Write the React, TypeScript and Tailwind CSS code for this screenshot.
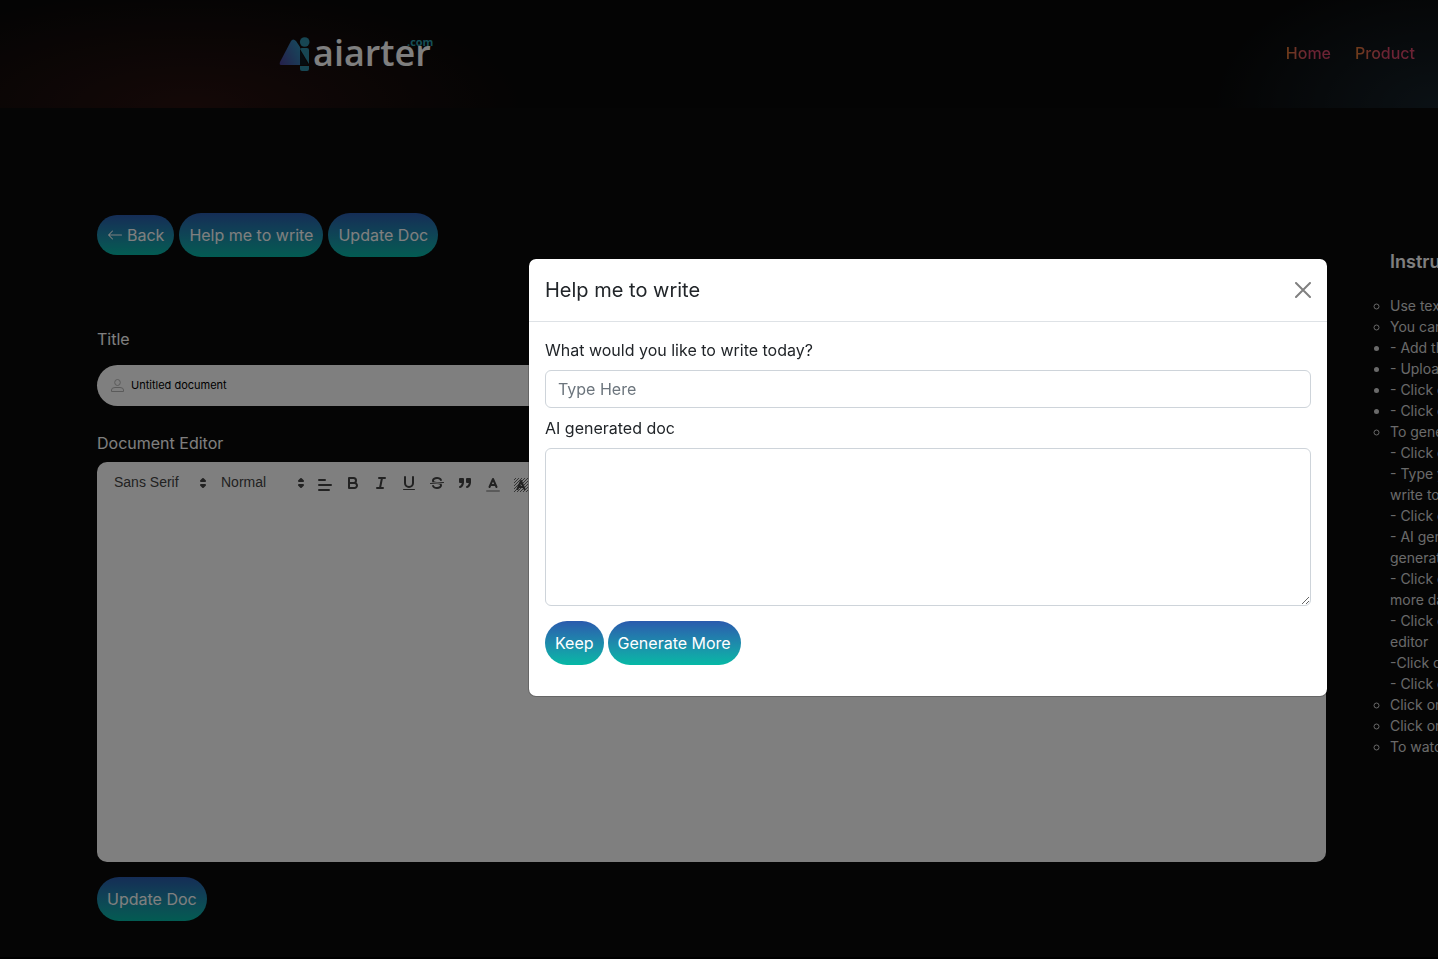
import React from "react";
import { BsArrowLeft } from "react-icons/bs";

const notes = [
  { type: "circle", lines: ["Use text"] },
  { type: "circle", lines: ["You can"] },
  { type: "disc", lines: ["- Add the"] },
  { type: "disc", lines: ["- Upload"] },
  { type: "disc", lines: ["- Click on"] },
  { type: "disc", lines: ["- Click on"] },
  {
    type: "circle",
    lines: [
      "To generate",
      "- Click on",
      "- Type your",
      "write today",
      "- Click on",
      "- AI generated",
      "generated",
      "- Click on",
      "more data",
      "- Click on",
      "editor",
      "-Click on",
      "- Click on",
    ],
  },
  { type: "circle", lines: ["Click on"] },
  { type: "circle", lines: ["Click on"] },
  { type: "circle", lines: ["To watch"] },
];

const tools = [
  {
    name: "Align",
    picker: true,
    icon: <path d="M3 9H15M3 14H13M3 4H9" />,
  },
  {
    name: "Bold",
    icon: (
      <>
        <path d="M5,4H9.5A2.5,2.5,0,0,1,12,6.5v0A2.5,2.5,0,0,1,9.5,9H5V4Z" />
        <path d="M5,9h5.5A2.5,2.5,0,0,1,13,11.5v0A2.5,2.5,0,0,1,10.5,14H5V9Z" />
      </>
    ),
  },
  {
    name: "Italic",
    icon: <path d="M7 4H13M5 14H11M8 14L10 4" />,
  },
  {
    name: "Underline",
    icon: (
      <>
        <path d="M5,3V9a4.012,4.012,0,0,0,4,4H9a4.012,4.012,0,0,0,4-4V3" />
        <rect fill="#444" stroke="none" height="1" width="12" x="3" y="15" rx="0.5" />
      </>
    ),
  },
  {
    name: "Strike",
    icon: (
      <>
        <path strokeWidth="1" d="M15.5 8.5L2.5 9.5" />
        <path
          fill="#444"
          stroke="none"
          d="M9.007,8C6.542,7.791,6,7.519,6,6.5,6,5.792,7.283,5,9,5c1.571,0,2.765.679,2.969,1.309a1,1,0,0,0,1.9-.617C13.356,4.106,11.354,3,9,3,6.2,3,4,4.538,4,6.5a3.2,3.2,0,0,0,.5,1.843Z"
        />
        <path
          fill="#444"
          stroke="none"
          d="M8.984,10C11.457,10.208,12,10.479,12,11.5c0,0.708-1.283,1.5-3,1.5-1.571,0-2.765-.679-2.969-1.309a1,1,0,1,0-1.9.617C4.644,13.894,6.646,15,9,15c2.8,0,5-1.538,5-3.5a3.2,3.2,0,0,0-.5-1.843Z"
        />
      </>
    ),
  },
  {
    name: "Blockquote",
    icon: (
      <g fill="#444">
        <rect height="3" width="3" x="4" y="5" />
        <rect height="3" width="3" x="11" y="5" />
        <path d="M7,8c0,4.031-3,5-3,5" />
        <path d="M14,8c0,4.031-3,5-3,5" />
      </g>
    ),
  },
  {
    name: "Text color",
    picker: true,
    icon: (
      <>
        <path opacity="0.4" d="M3 15H15" />
        <path d="M5.5 11L9 3L12.5 11M11.63 9H6.38" />
      </>
    ),
  },
  {
    name: "Background color",
    picker: true,
    icon: (
      <>
        <defs>
          <pattern id="hatch" width="3" height="3" patternUnits="userSpaceOnUse">
            <path d="M0 3L3 0M-1 1L1 -1M2 4L4 2" stroke="#444" strokeWidth="0.8" />
          </pattern>
        </defs>
        <rect x="2" y="2" width="14" height="14" fill="url(#hatch)" stroke="none" />
        <path d="M5.5 13L9 5L12.5 13M11.63 11H6.38" />
      </>
    ),
  },
];

const GradientButton = ({ children, small = false }: { children: React.ReactNode; small?: boolean }) => (
  <button
    type="button"
    className={`${small ? "py-2" : "py-2.5"} flex items-center gap-1 px-2.5 text-base text-white whitespace-nowrap rounded-full bg-linear-to-b from-[#2a5aad] to-[#05b8a5] cursor-pointer`}
  >
    {children}
  </button>
);

const Picker = ({ label, value, className }: { label: string; value: string; className: string }) => (
  <div className={`relative h-6 ${className}`}>
    <select
      aria-label={label}
      className="block w-full h-[22px] pl-2 appearance-none bg-transparent text-sm font-medium text-[#444] font-['Liberation_Sans',sans-serif]"
    >
      <option>{value}</option>
    </select>
    <svg className="absolute right-px top-[3px] pointer-events-none" width="18" height="18" viewBox="0 0 18 18" fill="#444" stroke="#444" strokeWidth="2" strokeLinejoin="round">
      <polygon points="7 11 9 13 11 11" />
      <polygon points="7 7 9 5 11 7" />
    </svg>
  </div>
);

const Logo = () => (
  <a href="#" aria-label="aiarter.com">
    <svg width="160" height="44" viewBox="0 0 160 44" className="overflow-visible">
      <defs>
        <linearGradient id="mark" x1="0" x2="1" y1="1" y2="0.4">
          <stop offset="0" stopColor="#4b3f96" />
          <stop offset="1" stopColor="#3187b5" />
        </linearGradient>
      </defs>
      <path d="M2 33Q0 33 1 30L12 9Q14 6 17 9L21 15V33Z" fill="url(#mark)" />
      <circle cx="25.700" cy="10" r="4.800" fill="#2e8ca6" />
      <path d="M21 17Q21 16 23 16H28Q30 16 30 18V32L21 17Z" fill="#2e8ca6" />
      <path d="M21 34H30V37Q30 39 28 39H23Q21 39 21 37Z" fill="#2e8ca6" />
      <path d="M21 18L29 33H21Z" fill="#0c1820" />
      <text x="34" y="34" fill="#fff" fontSize="36" fontWeight="600" fontFamily="Open Sans, sans-serif">
        aiarter
      </text>
      <text x="128" y="14" fill="#2b9cab" fontSize="11" fontWeight="700" fontFamily="Open Sans, sans-serif">
        .com
      </text>
    </svg>
  </a>
);

const Header = () => (
  <header className="flex items-center justify-between h-[108px] pl-[279px] pr-[23px] bg-[radial-gradient(ellipse_340px_120px_at_190px_108px,#29110f,transparent),radial-gradient(ellipse_230px_140px_at_100%_100%,#16222a,transparent)] bg-[#080808]">
    <Logo />
    <nav className="flex gap-6 pb-0.5 font-medium">
      <a href="#" className="bg-linear-to-r from-[#e07a30] to-[#d84668] to-50% bg-clip-text text-transparent">
        Home
      </a>
      <a href="#" className="bg-linear-to-r from-[#e07a30] to-[#d84668] to-50% bg-clip-text text-transparent">
        Product
      </a>
    </nav>
  </header>
);

const Editor = () => (
  <div className="h-[400px] p-[9px] rounded-[10px] bg-white">
    <div className="flex overflow-hidden">
      <Picker label="Font" value="Sans Serif" className="w-[107px]" />
      <Picker label="Heading" value="Normal" className="w-[98px]" />
      {tools.map(({ name, picker, icon }) => (
        <button type="button" aria-label={name} key={name} className={`w-7 h-6 px-[5px] ${picker ? "pt-1" : ""}`}>
          <svg width="18" height="18" viewBox="0 0 18 18" fill="none" stroke="#444" strokeWidth="2" strokeLinecap="round" strokeLinejoin="round">
            {icon}
          </svg>
        </button>
      ))}
    </div>
  </div>
);

const Modal = () => (
  <div className="fixed inset-0 flex items-center justify-end pb-1 pr-[110px] bg-black/50">
    <div
      role="dialog"
      aria-labelledby="modal-title"
      className="w-full max-w-[800px] rounded-lg border border-black/20 bg-white bg-clip-padding text-[#212529]"
    >
      <div className="flex items-center justify-between p-4 border-b border-[#dee2e6]">
        <h5 id="modal-title" className="text-xl leading-[30px]">
          Help me to write
        </h5>
        <button type="button" aria-label="Close" className="cursor-pointer">
          <svg width="16" height="16" viewBox="0 0 16 16" stroke="#808080" strokeWidth="2" strokeLinecap="round">
            <path d="M1 1L15 15M15 1L1 15" />
          </svg>
        </button>
      </div>
      <form className="flex flex-col gap-2 p-4">
        <label htmlFor="prompt">What would you like to write today?</label>
        <input
          id="prompt"
          type="text"
          placeholder="Type Here"
          className="h-[38px] px-3 rounded-md border border-[#ced4da] placeholder:text-[#6c757d]"
        />
        <label htmlFor="generated">AI generated doc</label>
        <textarea id="generated" className="h-[158px] px-3 py-1.5 rounded-md border border-[#ced4da]" />
        <div className="flex gap-1 pt-[7px] pb-[15px]">
          <GradientButton>Keep</GradientButton>
          <GradientButton>Generate More</GradientButton>
        </div>
      </form>
    </div>
  </div>
);

const App = () => {
  return (
    <div className="min-h-screen overflow-hidden bg-black text-base text-white font-['Inter',sans-serif]">
      <Header />
      <main className="flex pl-[97px] pb-9 bg-[#0a0a0a]">
        <div className="flex-1 min-w-0 pt-[105px]">
          <div className="flex items-center gap-[5px]">
            <GradientButton small>
              <BsArrowLeft />
              Back
            </GradientButton>
            <GradientButton>Help me to write</GradientButton>
            <GradientButton>Update Doc</GradientButton>
          </div>
          <label htmlFor="title" className="block mt-[70px]">
            Title
          </label>
          <div className="flex items-center gap-[7px] h-[41px] mt-3.5 pl-3.5 rounded-full bg-white">
            <svg width="13" height="13" viewBox="0 0 13 13" fill="none" stroke="#b4b4b4">
              <ellipse cx="6.500" cy="3.500" rx="2.800" ry="3" />
              <path d="M.5 12.500V11Q.5 8.500 4 8.500H9Q12.500 8.500 12.500 11V12.500Z" />
            </svg>
            <input id="title" type="text" defaultValue="Untitled document" className="flex-1 text-[11px] text-black" />
          </div>
          <h2 className="mt-[25px] mb-[7px]">Document Editor</h2>
          <Editor />
          <div className="flex mt-[15px]">
            <GradientButton>Update Doc</GradientButton>
          </div>
        </div>
        <aside className="w-28 pt-[140px] pl-16 overflow-hidden whitespace-nowrap">
          <h3 className="text-lg leading-[27px] font-semibold">Instructions</h3>
          <ul className="mt-5 text-sm leading-[21px] text-[#d4d4d4]">
            {notes.map(({ type, lines }, index) => (
              <li key={index} className={type === "disc" ? "list-disc" : "list-[circle]"}>
                {lines.map((line, i) => (
                  <p key={i}>{line}</p>
                ))}
              </li>
            ))}
          </ul>
        </aside>
      </main>
      <Modal />
    </div>
  );
};

export default App;
